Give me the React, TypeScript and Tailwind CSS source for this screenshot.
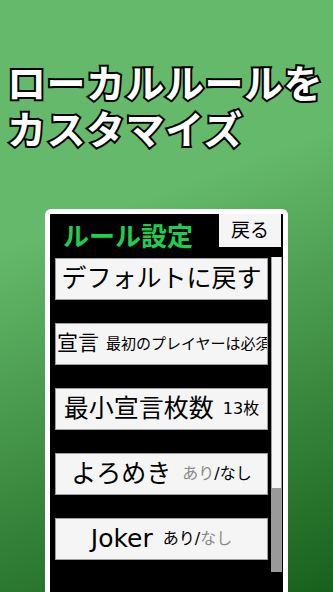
import React from "react";

const font = "font-['DejaVu_Sans','Noto_Sans_CJK_JP',sans-serif]";

const RuleButton = ({ children, start = false }: { children: React.ReactNode; start?: boolean }) => (
  <div
    className={`h-[42px] w-[213px] shrink-0 bg-[#f5f5f5] border border-[#9e9e9e] flex items-center overflow-hidden whitespace-nowrap text-black ${start ? "justify-start pl-[1px]" : "justify-center"}`}
  >
    {children}
  </div>
);

const App = () => {
  return (
    <div
      className={`w-[333px] h-[592px] overflow-hidden flex flex-col bg-linear-[160deg] from-[#65b96a] from-35% to-[#17611c] to-100% ${font}`}
    >
      {/* Headline */}
      <div className="pt-[58px] pl-[7px] text-white font-bold text-[39px] leading-[46px] font-['Noto_Sans_CJK_JP',sans-serif] [-webkit-text-stroke:4px_black] [paint-order:stroke_fill] tracking-[0.5px]">
        <div>ローカルルールを</div>
        <div>カスタマイズ</div>
      </div>

      {/* Phone frame */}
      <div className="mt-[59px] ml-[45px] w-[243px] flex-1 border-[5px] border-b-0 border-white rounded-t-[6px] bg-black flex flex-col">
        <div className="h-[43px] flex items-start">
          <div className="pl-[13px] pt-[5px] text-[26px] leading-[32px] font-bold text-[#1fce4f] font-['Noto_Sans_CJK_JP',sans-serif]">
            ルール設定
          </div>
          <div className="ml-auto mr-[2px] w-[62px] h-[33px] bg-[#f5f5f5] flex items-center justify-center text-[19px] text-black">
            戻る
          </div>
        </div>

        <div className="flex-1 flex">
          <div className="pl-[5px] pt-[1px] flex flex-col gap-[23px]">
            <RuleButton>
              <span className="text-[25px]">デフォルトに戻す</span>
            </RuleButton>
            <RuleButton start>
              <span className="text-[21px]">宣言</span>
              <span className="text-[15px] ml-[7px]">最初のプレイヤーは必須</span>
            </RuleButton>
            <RuleButton>
              <span className="text-[25px]">最小宣言枚数</span>
              <span className="text-[16px] ml-[9px]">13枚</span>
            </RuleButton>
            <RuleButton>
              <span className="text-[25px]">よろめき</span>
              <span className="text-[16px] ml-[11px]">
                <span className="text-[#8a8a8a]">あり</span>/なし
              </span>
            </RuleButton>
            <RuleButton>
              <span className="text-[25px]">Joker</span>
              <span className="text-[16px] ml-[10px]">
                あり/<span className="text-[#8a8a8a]">なし</span>
              </span>
            </RuleButton>
          </div>

          {/* Scrollbar */}
          <div className="ml-[3px] w-[11px] flex flex-col pb-[20px]">
            <div className="flex-1 bg-[#f7f7f7] border-x border-[#9e9e9e]" />
            <div className="h-[84px] bg-[#9a9a9a]" />
          </div>
        </div>
      </div>
    </div>
  );
};

export default App;
